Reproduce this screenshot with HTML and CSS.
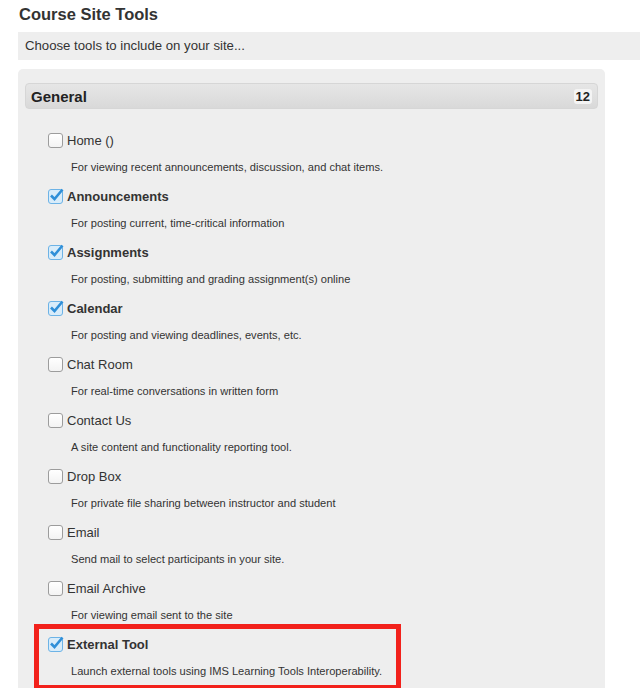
FILE: index.html
```html
<!DOCTYPE html>
<html lang="en">
<head>
    <meta charset="UTF-8">
    <title>Course Site Tools</title>
    <link rel="stylesheet" href="styles.css">
</head>
<body>

    <h1 class="page-title">Course Site Tools</h1>

    <div class="instruction">Choose tools to include on your site...</div>

    <!-- Tool group -->
    <div class="tool-panel">
        <div class="group-header">
            <span class="group-name">General</span>
            <span class="group-count">12</span>
        </div>

        <div class="tool-list">
            <div class="tool">
                <label class="tool-name"><span class="box"></span>Home ()</label>
                <div class="tool-desc">For viewing recent announcements, discussion, and chat items.</div>
            </div>
            <div class="tool checked">
                <label class="tool-name"><span class="box"><svg viewBox="0 0 16 16"><path d="M3 8.5 L6.5 12 L14.5 2.5"/></svg></span>Announcements</label>
                <div class="tool-desc">For posting current, time-critical information</div>
            </div>
            <div class="tool checked">
                <label class="tool-name"><span class="box"><svg viewBox="0 0 16 16"><path d="M3 8.5 L6.5 12 L14.5 2.5"/></svg></span>Assignments</label>
                <div class="tool-desc">For posting, submitting and grading assignment(s) online</div>
            </div>
            <div class="tool checked">
                <label class="tool-name"><span class="box"><svg viewBox="0 0 16 16"><path d="M3 8.5 L6.5 12 L14.5 2.5"/></svg></span>Calendar</label>
                <div class="tool-desc">For posting and viewing deadlines, events, etc.</div>
            </div>
            <div class="tool">
                <label class="tool-name"><span class="box"></span>Chat Room</label>
                <div class="tool-desc">For real-time conversations in written form</div>
            </div>
            <div class="tool">
                <label class="tool-name"><span class="box"></span>Contact Us</label>
                <div class="tool-desc">A site content and functionality reporting tool.</div>
            </div>
            <div class="tool">
                <label class="tool-name"><span class="box"></span>Drop Box</label>
                <div class="tool-desc">For private file sharing between instructor and student</div>
            </div>
            <div class="tool">
                <label class="tool-name"><span class="box"></span>Email</label>
                <div class="tool-desc">Send mail to select participants in your site.</div>
            </div>
            <div class="tool">
                <label class="tool-name"><span class="box"></span>Email Archive</label>
                <div class="tool-desc">For viewing email sent to the site</div>
            </div>
            <div class="tool checked highlight">
                <label class="tool-name"><span class="box"><svg viewBox="0 0 16 16"><path d="M3 8.5 L6.5 12 L14.5 2.5"/></svg></span>External Tool</label>
                <div class="tool-desc">Launch external tools using IMS Learning Tools Interoperability.</div>
            </div>
        </div>
    </div>

</body>
</html>
```

FILE: styles.css
```css
* {
    margin: 0;
    padding: 0;
    box-sizing: border-box;
}

body {
    font-family: "Liberation Sans", Arial, sans-serif;
    background-color: #fff;
    color: #333;
    padding-left: 18px;
    overflow: hidden;
}

.page-title {
    font-size: 16.5px;
    line-height: 24px;
    padding: 2px 0 0 1px;
    color: #333;
}

/* Instruction bar */
.instruction {
    margin-top: 6px;
    height: 28px;
    line-height: 28px;
    padding-left: 7px;
    background-color: #eee;
    font-size: 13.2px;
    color: #333;
}

/* Panel */
.tool-panel {
    margin-top: 9px;
    width: 587px;
    background-color: #eee;
    border-radius: 5px;
    padding: 14px 7px 0 7px;
    height: 700px;
}

.group-header {
    display: flex;
    justify-content: space-between;
    align-items: center;
    height: 26px;
    padding: 0 5px 0 5px;
    border-radius: 4px;
    border: 1px solid #d6d6d6;
    background: linear-gradient(#e6e6e6, #d9d9d9);
}

.group-name {
    font-size: 15px;
    font-weight: bold;
    color: #222;
}

.group-count {
    font-size: 13px;
    font-weight: bold;
    background-color: #f4f4f4;
    border-radius: 3px;
    padding: 0 2px;
    line-height: 15px;
    color: #222;
}

.tool-list {
    padding: 21px 0 0 23px;
}

.tool {
    padding-bottom: 10px;
}

.tool-name {
    display: flex;
    align-items: center;
    gap: 4px;
    height: 20px;
    font-size: 13px;
    color: #333;
}

.checked .tool-name {
    font-weight: bold;
}

.box {
    position: relative;
    width: 15px;
    height: 15px;
    border: 1px solid #9c9c9c;
    border-radius: 3px;
    background: linear-gradient(#fff, #f3f3f3);
}

.checked .box {
    border-color: #6db3e6;
    background: #d8ecfa;
}

.box svg {
    position: absolute;
    left: -1px;
    top: -3px;
    width: 16px;
    height: 16px;
    fill: none;
    stroke: #2f8fd8;
    stroke-width: 2.6;
}

.tool-desc {
    margin-top: 8px;
    padding-left: 23px;
    line-height: 18px;
    font-size: 11.1px;
    color: #333;
}

/* Red annotation around the highlighted tool */
.highlight {
    width: 367px;
    margin: -10px 0 0 -14px;
    padding: 5px 0 5px 9px;
    border: 5px solid #f2211b;
}
```
